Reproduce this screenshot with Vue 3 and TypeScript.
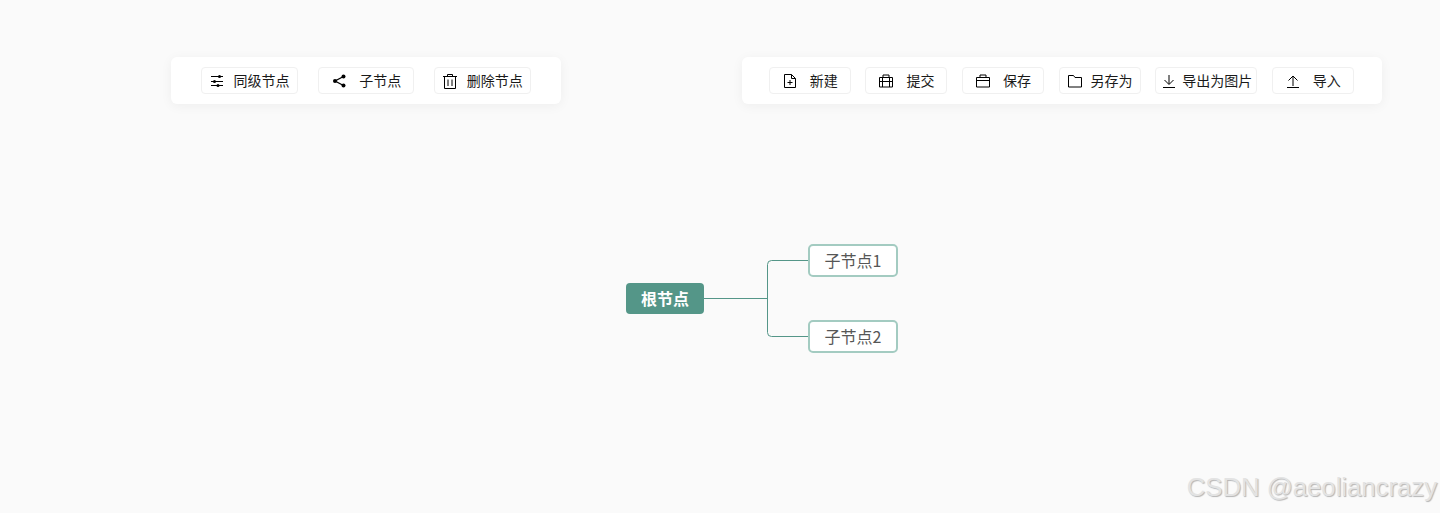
<script setup lang="ts">
interface Tool { label: string; icon: string; kind?: string }
const leftTools: Tool[] = [
  { label: '同级节点', icon: 'sliders', kind: 'tight' },
  { label: '子节点', icon: 'share' },
  { label: '删除节点', icon: 'trash', kind: 'tight' },
]
const rightTools: Tool[] = [
  { label: '新建', icon: 'file' },
  { label: '提交', icon: 'case' },
  { label: '保存', icon: 'bag' },
  { label: '另存为', icon: 'folder', kind: 'tight' },
  { label: '导出为图片', icon: 'down', kind: 'wide' },
  { label: '导入', icon: 'up' },
]
</script>

<template>
  <div class="page">
    <div class="bars">
      <div class="panel panel-left">
        <button v-for="t in leftTools" :key="t.label" class="tool" :class="t.kind">
          <svg class="ico" viewBox="0 0 16 16" fill="none" stroke="#000" stroke-width="1">
            <template v-if="t.icon === 'sliders'">
              <path d="M2 3.500h12M2 8.500h12M2 12.500h12" />
              <circle cx="10.500" cy="3.500" r="1.500" fill="#000" stroke="none" />
              <circle cx="5.500" cy="8.500" r="1.500" fill="#000" stroke="none" />
              <circle cx="9" cy="12.500" r="1.500" fill="#000" stroke="none" />
            </template>
            <template v-else-if="t.icon === 'share'">
              <path d="M12.500 3.500 4 8l8.500 4.500" stroke-width="1.300" />
              <circle cx="12.500" cy="3.500" r="2" fill="#000" stroke="none" />
              <circle cx="4" cy="8" r="2" fill="#000" stroke="none" />
              <circle cx="12.500" cy="12.500" r="2" fill="#000" stroke="none" />
            </template>
            <template v-else>
              <path d="M1 3.500h14M5.500 3.500V1.500h5v2M2.500 3.500v12h11v-12M6 6.500v6.500M10 6.500v6.500" />
            </template>
          </svg>
          <span>{{ t.label }}</span>
        </button>
      </div>
      <div class="panel panel-right">
        <button v-for="t in rightTools" :key="t.label" class="tool" :class="t.kind">
          <svg class="ico" viewBox="0 0 16 16" fill="none" stroke="#000" stroke-width="1">
            <template v-if="t.icon === 'file'">
              <path d="M2.500 1.500h7l4 4v9h-11zM9.500 1.500v4h4M5.500 9.500h5M8 7v5" />
            </template>
            <template v-else-if="t.icon === 'case'">
              <path d="M1.500 4.500h13v9.500h-13zM5 4.500v-2.500h6v2.500M1.500 8.500h13M4.500 4.500v9.500M11.500 4.500v9.500" />
            </template>
            <template v-else-if="t.icon === 'bag'">
              <path d="M1.500 4.500h13v9.500h-13zM5 4.500v-2.500h6v2.500M1.500 7.500h13" />
            </template>
            <template v-else-if="t.icon === 'folder'">
              <path d="M1.500 2.500h5l1.500 2h6.500v9.500h-13z" />
            </template>
            <template v-else-if="t.icon === 'down'">
              <path d="M8 2v9M3.500 7 8 11.500l4.500-4.500M2 14.500h12" />
            </template>
            <template v-else>
              <path d="M8 13V3.500M3.500 7.500 8 3l4.500 4.500M2 14.500h12" />
            </template>
          </svg>
          <span>{{ t.label }}</span>
        </button>
      </div>
    </div>

    <div class="canvas">
      <svg class="links" width="1440" height="513" viewBox="0 0 1440 513" fill="none" stroke="#549688">
        <path d="M704 298.500H767.500M808.500 260.500H771.500Q767.500 260.500 767.500 264.500V332.500Q767.500 336.500 771.500 336.500H808.500" />
      </svg>
      <div class="node root">根节点</div>
      <div class="node child c1">子节点1</div>
      <div class="node child c2">子节点2</div>
    </div>

    <div class="mark">CSDN @aeoliancrazy</div>
  </div>
</template>

<style>
html, body { margin: 0; padding: 0; background: #fafafa; }
</style>

<style scoped>
.page {
  position: relative;
  width: 1440px;
  height: 513px;
  overflow: hidden;
  background: #fafafa;
  font-family: "Noto Sans CJK SC", "Noto Sans", sans-serif;
}
.bars {
  position: relative;
  z-index: 1;
  display: flex;
  gap: 181px;
  padding: 57px 0 0 171px;
}
.panel {
  box-sizing: border-box;
  height: 47px;
  display: flex;
  align-items: center;
  background: #fff;
  border-radius: 6px;
  box-shadow: 0 2px 12px rgba(0, 0, 0, 0.05);
  padding-bottom: 1px;
}
.panel-left { width: 390px; padding-left: 30px; gap: 20px; }
.panel-right { width: 640px; padding-left: 26.800px; gap: 14.600px; }
.tool {
  box-sizing: border-box;
  width: 82px;
  height: 27px;
  padding: 0 12px;
  display: flex;
  align-items: center;
  justify-content: space-between;
  background: #fff;
  border: 1px solid #f0f0f0;
  border-radius: 4px;
  color: #1a1a1a;
  font: inherit;
  font-size: 14px;
  line-height: 1;
}
.panel-left .tool { width: 96.600px; }
.tool.tight { padding: 0 7px; }
.tool.wide { width: 102px; padding: 0 4px 0 5px; }
.ico { width: 16px; height: 16px; flex: none; margin-top: 2px; }
.links { position: absolute; left: 0; top: 0; }
.canvas { position: absolute; inset: 0; }
.node {
  position: absolute;
  box-sizing: border-box;
  display: flex;
  align-items: center;
  justify-content: center;
  border-radius: 4px;
  font-size: 16px;
  padding-bottom: 2px;
}
.root {
  left: 626px;
  top: 283px;
  width: 78px;
  height: 31px;
  background: #549688;
  color: #fff;
  font-weight: 700;
}
.child {
  left: 808px;
  width: 90px;
  height: 33px;
  background: #fff;
  border: 2px solid #a3cbc1;
  border-radius: 5px;
  color: #565656;
}
.c1 { top: 244px; }
.c2 { top: 320px; }
.mark {
  position: absolute;
  right: 3px;
  top: 469px;
  font-family: "Liberation Sans", Arial, sans-serif;
  font-size: 25.700px;
  line-height: 36px;
  color: #e3e3e3;
  text-shadow: 1px 1px 1px #b5b5b5;
  white-space: nowrap;
}
</style>
